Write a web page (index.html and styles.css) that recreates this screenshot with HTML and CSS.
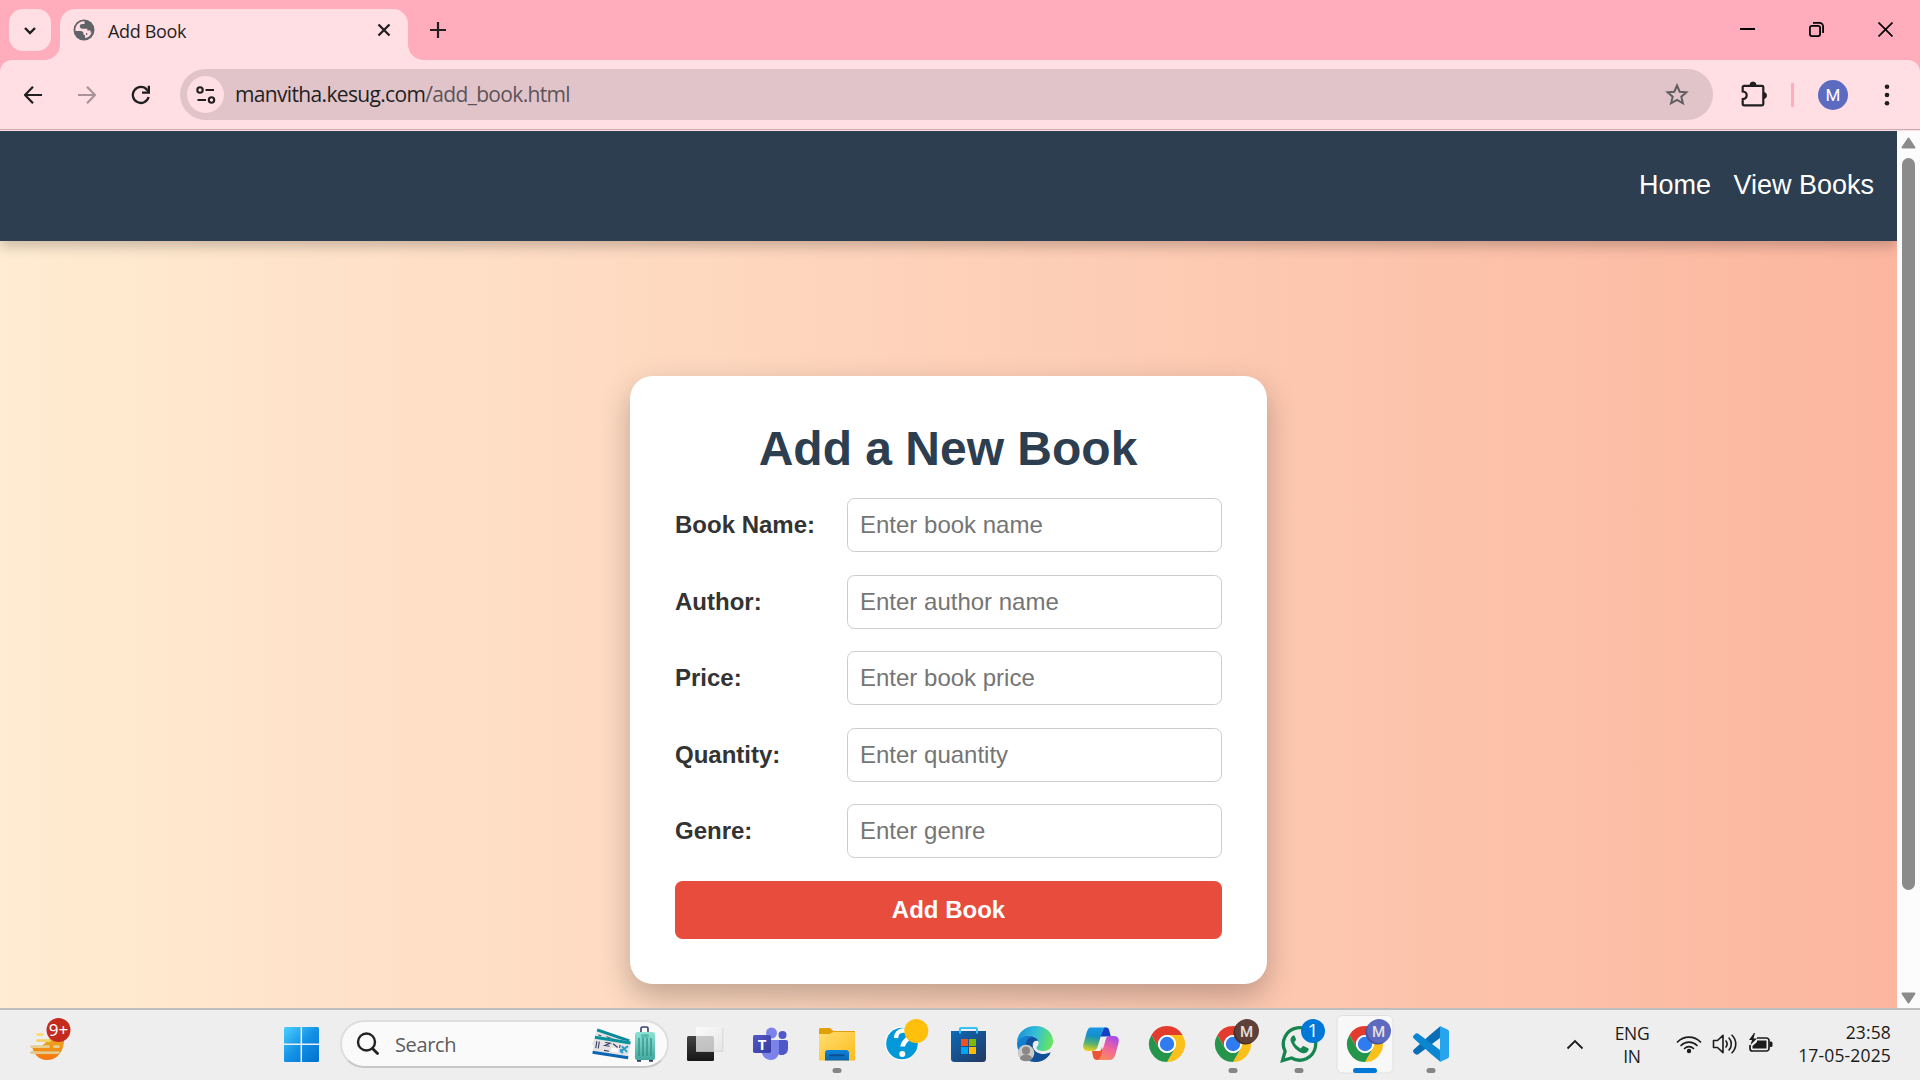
FILE: index.html
```html
<!DOCTYPE html>
<html lang="en">
<head>
<meta charset="utf-8">
<title>Add Book</title>
<link rel="stylesheet" href="styles.css">
</head>
<body>
<div class="screen">
  <header class="tabstrip">
    <button class="tab-search" aria-label="Search tabs"><svg width="14" height="9" viewBox="0 0 14 9"><path d="M2 2l5 5 5-5" fill="none" stroke="#1f1f1f" stroke-width="2.4"/></svg></button>
    <div class="tab">
      <svg class="favicon" width="22" height="22" viewBox="0 0 22 22"><circle cx="11" cy="11" r="10.5" fill="#5f6368"/><path d="M11.500 2.300C8 2 4.600 4 3 7.500c-.6 1.500-.8 3-.5 4.500h5.200c1.700 0 2.800 1 2.800 2.500v1.500H13v-2h4.500v-2.500h-3.200v-1.800H9.500c-1.700 0-2.700-1-2.700-2.400 0-1.500 1-2.300 2.600-2.300h2.100z" fill="#ffdde4"/><path d="M18.800 11.500c0 3.600-2.700 7.200-6.800 7.600v-3h2.200v-2.300h4.600z" fill="#ffdde4"/><path d="M3 12.500c.7 4 4 6.800 7.600 7.100v-3.500L7 12.500z" fill="#5f6368"/></svg>
      <span class="tab-title">Add Book</span>
      <svg class="tab-close" width="14" height="14" viewBox="0 0 14 14"><path d="M1.500 1.500l11 11M12.500 1.500l-11 11" stroke="#1f1f1f" stroke-width="2.300"/></svg>
    </div>
    <svg class="new-tab" width="16" height="16" viewBox="0 0 16 16"><path d="M8 0v16M0 8h16" stroke="#1f1f1f" stroke-width="2.200"/></svg>
    <div class="window-controls">
      <svg width="15" height="15" viewBox="0 0 15 15"><path d="M0 7h15" stroke="#000" stroke-width="2"/></svg>
      <svg width="15" height="15" viewBox="0 0 15 15"><rect x=".9" y="3.900" width="10.200" height="10.200" rx="2" fill="none" stroke="#000" stroke-width="1.800"/><path d="M4 .9h6.500a3.600 3.600 0 0 1 3.600 3.600V11" fill="none" stroke="#000" stroke-width="1.800"/></svg>
      <svg width="15" height="15" viewBox="0 0 15 15"><path d="M.5.5l14 14M14.500.5l-14 14" stroke="#000" stroke-width="1.700"/></svg>
    </div>
  </header>

  <div class="toolbar">
    <div class="nav-buttons">
      <svg width="18" height="18" viewBox="0 0 18 18"><path d="M18 9H1.500M9 .8L1 9l8 8.200" fill="none" stroke="#1f1f1f" stroke-width="2.200"/></svg>
      <svg width="18" height="18" viewBox="0 0 18 18"><path d="M0 9h16.500M9 .8L17 9l-8 8.200" fill="none" stroke="#aa9398" stroke-width="2.200"/></svg>
      <svg width="20" height="20" viewBox="0 0 20 20"><path d="M17.600 12A8 8 0 1 1 16 4.800L17.500 6.500" fill="none" stroke="#1f1f1f" stroke-width="2.300"/><path d="M19 .8v8h-8V6.500h5.700V.8z" fill="#1f1f1f"/></svg>
    </div>
    <div class="omnibox">
      <span class="site-info"><svg width="20" height="18" viewBox="0 0 20 18"><g fill="none" stroke="#1f1f1f" stroke-width="2.100"><circle cx="4" cy="4" r="2.700"/><path d="M9.500 4H18M1.500 14H10"/><circle cx="15.500" cy="14" r="2.700"/></g></svg></span>
      <span class="url">manvitha.kesug.com<span class="url-path">/add_book.html</span></span>
      <svg class="star" width="24" height="23" viewBox="0 0 24 23"><path d="M12 2.500l2.700 6.200 6.700.6-5.100 4.400 1.600 6.600L12 16.800l-5.900 3.500 1.600-6.600-5.100-4.400 6.700-.6z" fill="none" stroke="#5f5f62" stroke-width="2"/></svg>
    </div>
    <svg class="extensions" width="26" height="26" viewBox="0 0 26 26"><path d="M3 4.800h18a1.300 1.300 0 0 1 1.300 1.300v17a1.300 1.300 0 0 1-1.300 1.300H3A1.300 1.300 0 0 1 1.700 23v-4.800C7 17.500 7 11 1.700 10.500V6.100A1.300 1.300 0 0 1 3 4.800z" fill="none" stroke="#1f1f1f" stroke-width="2.200"/><path d="M9 4a3 3 0 0 1 6 0zM22.500 11.500a3 3 0 0 1 0 6z" fill="#1f1f1f" stroke="#1f1f1f"/></svg>
    <span class="divider"></span>
    <span class="avatar">M</span>
    <svg class="menu" width="6" height="24" viewBox="0 0 6 24"><g fill="#1f1f1f"><circle cx="3" cy="3.700" r="2.300"/><circle cx="3" cy="12" r="2.300"/><circle cx="3" cy="20.300" r="2.300"/></g></svg>
  </div>

  <div class="viewport">
    <div class="page">
      <nav class="navbar"><a>Home</a><a>View Books</a></nav>
      <main class="content">
        <form class="card">
          <h2>Add a New Book</h2>
          <div class="field"><label for="n">Book Name:</label><input id="n" placeholder="Enter book name"></div>
          <div class="field"><label for="a">Author:</label><input id="a" placeholder="Enter author name"></div>
          <div class="field"><label for="p">Price:</label><input id="p" placeholder="Enter book price"></div>
          <div class="field"><label for="q">Quantity:</label><input id="q" placeholder="Enter quantity"></div>
          <div class="field"><label for="g">Genre:</label><input id="g" placeholder="Enter genre"></div>
          <button class="submit" type="button">Add Book</button>
        </form>
      </main>
    </div>
    <div class="scrollbar">
      <svg width="15" height="12" viewBox="0 0 15 12"><path d="M7.500 1.500L13.500 10.500h-12z" fill="#8b8b8b" stroke="#8b8b8b" stroke-width="2" stroke-linejoin="round"/></svg>
      <span class="thumb"></span>
      <svg class="down" width="15" height="12" viewBox="0 0 15 12"><path d="M7.500 10.500L13.500 1.500h-12z" fill="#8b8b8b" stroke="#8b8b8b" stroke-width="2" stroke-linejoin="round"/></svg>
    </div>
  </div>

  <footer class="taskbar">
    <svg class="defs" width="0" height="0">
      <defs>
        <linearGradient id="win" x1="0" y1="0" x2="1" y2="1"><stop offset="0" stop-color="#4cd0fd"/><stop offset=".5" stop-color="#1391e6"/><stop offset="1" stop-color="#0070ce"/></linearGradient>
        <linearGradient id="sun" x1="0" y1="0" x2="0" y2="1"><stop offset="0" stop-color="#e8b020"/><stop offset="1" stop-color="#f7740f"/></linearGradient>
        <linearGradient id="dark" x1="0" y1="0" x2="0" y2="1"><stop offset="0" stop-color="#444"/><stop offset="1" stop-color="#161616"/></linearGradient>
        <linearGradient id="glass" x1="0" y1="0" x2="1" y2="1"><stop offset="0" stop-color="#fff" stop-opacity=".72"/><stop offset="1" stop-color="#e3e3e3" stop-opacity=".8"/></linearGradient>
        <linearGradient id="folder" x1="0" y1="0" x2="1" y2="1"><stop offset="0" stop-color="#ffdf72"/><stop offset="1" stop-color="#fcbb1b"/></linearGradient>
        <linearGradient id="pocket" x1="0" y1="0" x2="0" y2="1"><stop offset="0" stop-color="#0b83db"/><stop offset="1" stop-color="#0c66b4"/></linearGradient>
        <linearGradient id="bag" x1="0" y1="0" x2="1" y2="1"><stop offset="0" stop-color="#0d69b8"/><stop offset="1" stop-color="#24375f"/></linearGradient>
        <linearGradient id="edgeTop" x1="0" y1=".3" x2="1" y2=".5"><stop offset="0" stop-color="#1892d8"/><stop offset=".5" stop-color="#33bfd6"/><stop offset="1" stop-color="#68e65c"/></linearGradient>
        <linearGradient id="edgeLow" x1="0" y1="0" x2="1" y2="1"><stop offset="0" stop-color="#1489dc"/><stop offset="1" stop-color="#0c529f"/></linearGradient>
        <linearGradient id="copA" x1=".5" y1="0" x2=".35" y2="1"><stop offset="0" stop-color="#1a98e8"/><stop offset=".35" stop-color="#128fc8"/><stop offset=".7" stop-color="#5bb36c"/><stop offset="1" stop-color="#e9d21d"/></linearGradient>
        <linearGradient id="copB" x1=".7" y1="0" x2=".3" y2="1"><stop offset="0" stop-color="#a84bea"/><stop offset=".5" stop-color="#f0659a"/><stop offset="1" stop-color="#f98b5c"/></linearGradient>
        <linearGradient id="suit" x1="0" y1="0" x2="0" y2="1"><stop offset="0" stop-color="#8de3d4"/><stop offset="1" stop-color="#42a89f"/></linearGradient>
        <linearGradient id="teams" x1="0" y1="0" x2="1" y2="1"><stop offset="0" stop-color="#5358c4"/><stop offset="1" stop-color="#383da2"/></linearGradient>
        <path id="arc" d="M-15.590-9A18 18 0 0 1 15.590-9H0A9 9 0 0 0-7.790 4.500Z"/>
        <g id="chrome"><use href="#arc" fill="#e33b2e"/><use href="#arc" fill="#fcc01a" transform="rotate(120)"/><use href="#arc" fill="#24954a" transform="rotate(240)"/><circle r="9" fill="#fff"/><circle r="7.200" fill="#2f7bef"/></g>
      </defs>
    </svg>
    <svg class="widget" width="42" height="44" viewBox="0 0 42 44"><path d="M2 28c5 3 11 0 15-5s10-5 17-4c1 10-4 23-17 23C8 42 3 35 2 28z" fill="url(#sun)"/><g stroke-width="2.800" stroke-linecap="round"><path d="M7.500 16.500h5" stroke="#f8dc80"/><path d="M7.500 22.700h12" stroke="#f3d268"/><path d="M1.500 28.700h17M24.500 28.700h4" stroke="#e6cf8e"/><path d="M1.500 34.700h27" stroke="#e3c98b"/></g><circle cx="28.500" cy="12" r="12" fill="#c42b1c"/><text x="28.500" y="17.500" class="widget-count">9+</text></svg>
    <svg class="start" width="35" height="35" viewBox="0 0 35 35"><rect width="35" height="35" rx="1.500" fill="url(#win)"/><path d="M17.300 0v35M0 17.300h35" stroke="#eeeeee" stroke-width="1.500"/></svg>
    <div class="search">
      <svg width="24" height="24" viewBox="0 0 24 24"><circle cx="10.500" cy="10" r="8.500" fill="none" stroke="#222" stroke-width="2.400"/><path d="M16.500 16.500l5 5" stroke="#222" stroke-width="2.800" stroke-linecap="round"/></svg>
      <span class="search-text">Search</span>
      <svg class="travel" width="64" height="36" viewBox="0 0 64 36">
        <g transform="rotate(19 4 4)"><rect x="5" y="2" width="34" height="17" fill="#e5e3df"/><rect x="5" y="2" width="34" height="3" fill="#078a99"/><path d="M8 8h3M8 11h3M8 14h3M16 7h15" stroke="#34406b"/></g>
        <g transform="rotate(9 4 11)"><rect x="3" y="10" width="36" height="18" fill="#e6e4e2"/><rect x="3" y="10" width="36" height="3" fill="#07919c"/><rect x="3" y="25" width="36" height="3" fill="#0b65b5"/><path d="M5.500 15v7M8 15v7M14 15h5l-5 3h5m-5 5h5M22 15l5 3M29 15v3" stroke="#363d6a" stroke-width="1.100" fill="none"/><rect x="21" y="19" width="7" height="4" fill="#fff"/><path d="M30 22l7-7M31 16l6 5M30 19l3 4" stroke="#2f9dc9" stroke-width="2"/></g>
        <path d="M49 7V2.500a1.500 1.500 0 0 1 1.500-1.500h4a1.500 1.500 0 0 1 1.500 1.500V7" fill="none" stroke="#34406c" stroke-width="1.600"/><rect x="43" y="6" width="20" height="28" rx="2.500" fill="url(#suit)"/><path d="M47 12v18M51 12v18M55 12v18M59 12v18" stroke="#318e88" stroke-width="1.300"/><rect x="49" y="8" width="8" height="4" rx="2" fill="#5bbcb0"/><path d="M45 34.800h4M57 34.800h4" stroke="#313961" stroke-width="1.700"/>
      </svg>
    </div>
    <div class="apps">
      <svg viewBox="0 0 66 70"><rect x="15" y="26" width="27" height="25" rx="1.500" fill="url(#dark)"/><rect x="24" y="17" width="27" height="24.500" rx="1" fill="url(#glass)"/><path d="M24 41.300h26.800V18" fill="none" stroke="#d2d2d2" stroke-width=".8"/></svg>
      <svg viewBox="1 0 66 70"><circle cx="45.500" cy="25" r="4" fill="#5058c8"/><path d="M38 30h11a2 2 0 0 1 2 2v6c0 5-3 7-6 7s-7-2-7-6z" fill="#5058c8"/><circle cx="34.500" cy="23" r="5.500" fill="#7b83eb"/><path d="M27 30h15v11c0 6-4 9-8 9s-9-3-9-8z" fill="#7b83eb"/><rect x="16" y="25" width="18" height="18" rx="1.700" fill="url(#teams)"/><text x="25" y="39.500" class="teams-letter">T</text></svg>
      <svg viewBox="0 0 66 70"><path d="M15 19.500a1.500 1.500 0 0 1 1.500-1.500H26l3.500 3H51v6H15z" fill="#e0a008"/><path d="M15 24h10.500l4-2H51v28.500H15z" fill="url(#folder)"/><path d="M21 50.500V43a3 3 0 0 1 3-3h18a3 3 0 0 1 3 3v7.500z" fill="url(#pocket)"/><path d="M25.500 45.300h15" stroke="#0b4e8e" stroke-width="1.800"/><rect x="28.500" y="58" width="9" height="5" rx="2.500" fill="#858585"/></svg>
      <svg viewBox="0 0 66 70"><circle cx="32" cy="33.500" r="17" fill="#fff"/><circle cx="32" cy="33.500" r="15.800" fill="#0398d8"/><path d="M26 28c0-9 13-10 13-2.500 0 5-6.300 5-6.300 11" fill="none" stroke="#fff" stroke-width="4.500"/><circle cx="32.300" cy="44" r="3" fill="#fff"/><circle cx="46.300" cy="21" r="12" fill="#ffbf0a"/></svg>
      <svg viewBox="0.500 0 66 70"><path d="M15.500 21h35v27.500a3.500 3.500 0 0 1-3.500 3.500H19a3.500 3.500 0 0 1-3.500-3.500z" fill="url(#bag)"/><path d="M24.500 23.500V19a1 1 0 0 1 1-1h15a1 1 0 0 1 1 1v4.500" fill="none" stroke="#35c1f1" stroke-width="2"/><path d="M25.500 29H32.500v7h-7z" fill="#f25022"/><path d="M33.500 29h7v7h-7z" fill="#7fba00"/><path d="M25.500 37h7v7h-7z" fill="#00a4ef"/><path d="M33.500 37h7v7h-7z" fill="#ffb900"/></svg>
      <svg viewBox="0 0 66 70"><path d="M15 33C15 22 24 16 33.500 16 44 16 51 23 51 31c0 6-4 10-9.500 10-4 0-7-1-7-3 0-1.500 2-2 2-5 0-4-4-7.500-9-7.500C22 25.500 17 28 15 33z" fill="url(#edgeTop)"/><path d="M15 33c2-6 8-8 12.500-7.500C33 26 36 29 36.500 31c-2-1-6 0-6 4 0 6 6 9.500 12 9 3-.2 5-1.300 6-1.500-2 5-8 9.500-15 9.500C23 52 15 44 15 33z" fill="url(#edgeLow)"/><path d="M26 29c-5 6-1 17 6 22.500 7 1.500 14-3 16.500-9-1 .2-3 1.300-6 1.500-6 .5-12-3-12-9 0-3 2-5 5-4.500-2-3-6-4-9.500-1.500z" fill="#124f97"/><circle cx="24" cy="43" r="8.300" fill="#cdcbc9"/><circle cx="24" cy="40.500" r="4" fill="#8a8784"/><path d="M18 49c0-6 12-6 12 0-3 3-9 3-12 0z" fill="#8a8784"/></svg>
      <svg viewBox="0 0 66 70"><path d="M36 17.500h2.500c3 0 3 5 4.500 9H32z" fill="#153fc5"/><path d="M24 41h7c2 0 2-1 3-4l3 13h-8c-4 0-4-4-5-9z" fill="#ec5438"/><path d="M23 17.500h15c-3 1-4 4-5 8l-3 10c-1 4-3 5.500-6 5.500h-4c-4 0-5.500-3-4.500-7l3-11c1-3.500 2-5.500 4.500-5.500z" fill="url(#copA)"/><path d="M42 26h4c4 0 5.500 3 4.500 7l-3 11c-1 4-3 6-6 6H29c3 0 4-4 5-8l3-10c1-4 2-6 5-6z" fill="url(#copB)"/></svg>
      <svg viewBox="0 0 66 70"><use href="#chrome" x="33" y="34"/></svg>
      <svg viewBox="0 0 66 70"><use href="#chrome" x="33" y="34"/><circle cx="45.500" cy="22.500" r="12" fill="#493028"/><circle cx="47" cy="21" r="12" fill="#5d4037"/><text x="46.500" y="26.500" class="badge-letter">M</text><rect x="28.500" y="58" width="9" height="5" rx="2.500" fill="#858585"/></svg>
      <svg viewBox="0 0 66 70"><path d="M16.500 50.500l2.600-9.200A16.200 16.200 0 1 1 25.500 48z" fill="none" stroke="#17854f" stroke-width="3.300"/><path d="M27.500 25.500c-3 1.500-3.500 4-2.500 6.500 2 5 6 9 11 11 3 1 5.500-.5 6.500-3 .4-1.200 0-1.500-.8-2l-3.700-1.800c-.8-.4-1.300-.2-1.800.5l-1.400 1.700c-3-1.300-5.300-3.400-6.600-6.100l1.400-1.800c.5-.6.500-1 .3-1.600l-1.400-3.400z" fill="#17854f"/><circle cx="47" cy="21" r="12" fill="#0078d7"/><text x="47" y="27" class="badge-count">1</text><rect x="28.500" y="58" width="9" height="5" rx="2.500" fill="#858585"/></svg>
      <svg viewBox="0 0 66 70"><rect x="5" y="5.500" width="56" height="57.500" rx="5.500" fill="#f8f8f8" stroke="#e0e0e0"/><use href="#chrome" x="33" y="34"/><circle cx="45.500" cy="22.500" r="12" fill="#47529b"/><circle cx="47" cy="21" r="12" fill="#5c6bc0"/><text x="46.500" y="26.500" class="badge-letter">M</text><rect x="21" y="58" width="24" height="5" rx="2.500" fill="#0078d7"/></svg>
      <svg viewBox="0 0 66 70"><path d="M42 28V16.500L33 24 15.800 39.500c-1 1-1 2.200 0 3.200l1.700 1.500c.9.700 2 .6 2.800 0z" fill="#0a6eb6"/><path d="M42 40v11.500L33 44 15.800 28.500c-1-1-1-2.200 0-3.200l1.700-1.500c.9-.7 2-.6 2.800 0z" fill="#0b86d0"/><path d="M42 16l7.500 3.500c1 .5 1.500 1.200 1.500 2.300v24.400c0 1.100-.5 1.800-1.500 2.300L42 52z" fill="#27a4ee"/><rect x="28.500" y="58" width="9" height="5" rx="2.500" fill="#858585"/></svg>
    </div>
    <div class="tray">
      <svg width="18" height="11" viewBox="0 0 18 11"><path d="M1.500 9.500L9 2l7.500 7.500" fill="none" stroke="#1b1b1b" stroke-width="1.800"/></svg>
      <span class="lang">ENG<br>IN</span>
      <svg class="wifi" width="26" height="20" viewBox="0 0 26 20"><g fill="none" stroke="#1b1b1b" stroke-width="1.700" stroke-linecap="round"><path d="M1.500 8a16 16 0 0 1 23 0M5 11.500a11.300 11.300 0 0 1 16 0M8.500 14.500a6.500 6.500 0 0 1 9 0"/></g><circle cx="13" cy="17" r="2.200" fill="#1b1b1b"/></svg>
      <svg class="volume" width="26" height="22" viewBox="0 0 26 22"><g fill="none" stroke="#1b1b1b" stroke-width="1.600" stroke-linecap="round" stroke-linejoin="round"><path d="M1.500 7.500h4L11 2.300v17.400l-5.500-5.200h-4z"/><path d="M14 8a5 5 0 0 1 0 6M17 5a9 9 0 0 1 0 12M20 2.200c5 5 5 12.600 0 17.600"/></g></svg>
      <svg class="battery" width="26" height="22" viewBox="0 0 26 22"><path d="M9 6h9.500A2.500 2.500 0 0 1 21 8.500v8a2.500 2.500 0 0 1-2.500 2.500h-14A2.500 2.500 0 0 1 2 16.500V13" fill="none" stroke="#1b1b1b" stroke-width="1.700"/><path d="M9 8.500h9.500v8h-14V14L9 10zM21.500 9.500H23a1.500 1.500 0 0 1 1.500 1.500v2.500A1.500 1.500 0 0 1 23 15h-1.500zM6 1L1 8h3l-1.500 5L9 6.500H5.500L7 1z" fill="#1b1b1b"/></svg>
      <span class="clock">23:58<br>17-05-2025</span>
    </div>
  </footer>
</div>
</body>
</html>
```
FILE: styles.css
```css
* { box-sizing: border-box; }
body { margin: 0; overflow: hidden; font-family: "Liberation Sans", Arial, sans-serif; }
svg { display: block; flex: none; }
.screen { width: 1920px; height: 1080px; display: flex; flex-direction: column; overflow: hidden; background: #ffadbc; }

/* Browser chrome */
.tabstrip { height: 60px; display: flex; align-items: flex-start; padding: 9px 27px 0 9px; background: #ffadbc; font-family: "Open Sans", sans-serif; }
.tab-search { width: 42px; height: 42px; padding: 0; border: 0; border-radius: 14px; background: #ffdee4; display: flex; align-items: center; justify-content: center; }
.tab { position: relative; width: 348px; height: 51px; margin-left: 9px; padding: 0 17px 9px 13px; border-radius: 15px 15px 0 0; background: #ffdee4; display: flex; align-items: center; }
.tab::before, .tab::after { content: ""; position: absolute; bottom: 0; width: 15px; height: 15px; }
.tab::before { left: -15px; background: radial-gradient(circle at 0 0, transparent 14.500px, #ffdee4 15px); }
.tab::after { right: -15px; background: radial-gradient(circle at 100% 0, transparent 14.500px, #ffdee4 15px); }
.tab-title { margin: 2px auto 0 13px; font-size: 18px; letter-spacing: -.35px; color: #1f1f1f; }
.new-tab { margin: 13px 0 0 22px; }
.window-controls { display: flex; gap: 54px; margin: 13px 0 0 auto; }
.toolbar { height: 71px; flex: none; display: flex; align-items: center; padding: 0 30px 2px 24px; border-radius: 12px 12px 0 0; background: linear-gradient(#ffdee4 69px, #c9adb3 69px, #c9adb3 70px, #ffdee4 70px); }
.nav-buttons { display: flex; align-items: center; gap: 36px; width: 156px; }
.nav-buttons svg:last-child { margin-left: -1px; }
.omnibox { width: 1533px; height: 51px; border-radius: 26px; background: #e1c4ca; display: flex; align-items: center; padding: 0 24px 0 7px; }
.site-info { width: 37px; height: 37px; border-radius: 50%; background: #ffdee4; display: flex; align-items: center; justify-content: center; }
.url { margin: -1px auto 0 11px; font: 21px "Open Sans", sans-serif; letter-spacing: -.66px; color: #1f1f1f; }
.url-path { color: #5c5458; }
.extensions { margin: -2px 0 0 28px; }
.divider { width: 3px; height: 24px; border-radius: 1px; background: #ffadbc; margin-left: 24px; }
.avatar { width: 30px; height: 30px; margin-left: 24px; border-radius: 50%; background: #5c6bc0; color: #fff; font: 17px/30px Roboto, sans-serif; text-align: center; }
.menu { margin-left: 36px; }

/* Book page */
.viewport { flex: 1; min-height: 0; display: flex; }
.page { width: 1897px; display: flex; flex-direction: column; overflow: hidden; background: linear-gradient(to right, #ffecd2, #fcb69f); }
.navbar { height: 110px; flex: none; padding: 37px 23px 0; display: flex; justify-content: flex-end; gap: 22.500px; background: #2c3e50; color: #fff; font-size: 27px; line-height: 34px; box-shadow: 0 6px 12px rgba(0,0,0,.2); z-index: 1; }
.content { display: flex; justify-content: center; padding-top: 135px; }
.card { width: 637px; height: 608px; padding: 45px 45px 0; border-radius: 22.500px; background: #fff; box-shadow: 0 12px 30px rgba(0,0,0,.25); }
.card h2 { margin: 0 0 22px -1px; font-size: 48px; line-height: 55px; text-align: center; color: #2c3e50; }
.field { display: flex; align-items: center; justify-content: space-between; margin-bottom: 22.500px; }
.field label { font-size: 24px; font-weight: bold; color: #333; }
.field input { width: 375px; height: 54px; padding: 0 12px; border: 1px solid #ccc; border-radius: 7.500px; font: 24px "Liberation Sans", Arial, sans-serif; background: #fff; }
.field input::placeholder { color: #757575; }
.submit { width: 100%; height: 58.500px; padding: 0; border: 0; border-radius: 7.500px; background: #e74c3c; color: #fff; font: bold 24px "Liberation Sans", Arial, sans-serif; }
.scrollbar { width: 23px; background: #fcfcfc; display: flex; flex-direction: column; align-items: center; padding: 6px 0 4px; }
.thumb { width: 13px; height: 732px; margin-top: 9px; border-radius: 7px; background: #8b8b8b; }
.down { margin-top: auto; }

/* Taskbar */
.taskbar { height: 72px; flex: none; border-top: 2px solid #bdbdbd; background: #eee; display: flex; align-items: center; padding: 0 29px 2px 30px; font-family: "Open Sans", sans-serif; }
.defs { position: absolute; }
.widget { margin-top: -8px; }
.start { margin-left: 212px; }
.search { width: 329px; height: 48px; margin-left: 21px; padding: 0 11px 0 14px; border: 2px solid #dedede; border-bottom-color: #c8c8c8; border-radius: 24px; background: #fafafa; display: flex; align-items: center; }
.search-text { margin: 0 auto 0 15px; font-size: 20px; letter-spacing: -.35px; color: #5c5c5c; }
.apps { display: flex; margin: 2px 0 0 3px; }
.apps svg { width: 66px; height: 70px; }
.widget-count { font: 17px "Noto Sans", sans-serif; fill: #fff; text-anchor: middle; }
.teams-letter { font: bold 15px "Open Sans", sans-serif; fill: #fff; text-anchor: middle; }
.badge-letter { font: 500 15px Roboto, sans-serif; fill: #e6dedb; text-anchor: middle; }
.badge-count { font: 19px "Open Sans", sans-serif; fill: #fff; text-anchor: middle; }
.tray { margin-left: auto; display: flex; align-items: center; font-size: 17.500px; line-height: 23px; color: #1b1b1b; }
.lang { width: 40px; margin: 2px 0 0 28px; text-align: center; letter-spacing: -.3px; }
.wifi { margin: -1px 0 0 24px; }
.volume { margin: 0 10px; }
.battery { margin-top: -2px; }
.clock { width: 96px; margin: -1px 0 0 21px; text-align: right; letter-spacing: .15px; }
```
